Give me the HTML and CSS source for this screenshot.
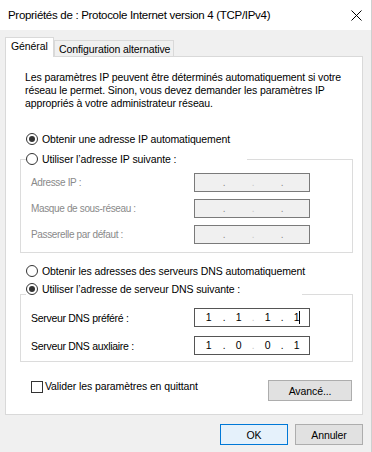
FILE: index.html
```html
<!DOCTYPE html>
<html lang="fr">
<head>
<meta charset="utf-8">
<title>Propriétés de : Protocole Internet version 4 (TCP/IPv4)</title>
<link rel="stylesheet" href="styles.css">
</head>
<body>
<div class="window">
  <div class="titlebar">
    <span class="title">Propriétés de : Protocole Internet version 4 (TCP/IPv4)</span>
    <svg class="close" width="11" height="11" viewBox="0 0 11 11"><path d="M0.5 0.5 L10.5 10.5 M10.5 0.5 L0.5 10.5" stroke="#000" stroke-width="1" fill="none"/></svg>
  </div>
  <div class="content">
    <div class="tabs">
      <div class="tab active">Général</div>
      <div class="tab">Configuration alternative</div>
    </div>
    <div class="panel">
      <p class="intro">Les paramètres IP peuvent être déterminés automatiquement si votre<br>réseau le permet. Sinon, vous devez demander les paramètres IP<br>appropriés à votre administrateur réseau.</p>

      <div class="radio-row first"><span class="radio checked"></span><span>Obtenir une adresse IP automatiquement</span></div>

      <fieldset class="group group-ip">
        <legend class="legend legend-ip"><span class="radio"></span><span>Utiliser l’adresse IP suivante :</span></legend>
        <div class="rows rows-ip">
          <div class="field disabled"><span class="label">Adresse IP :</span>
            <div class="ipbox"><span></span><span class="dot">.</span><span></span><span class="dot dim">.</span><span></span><span class="dot">.</span><span></span></div></div>
          <div class="field disabled"><span class="label">Masque de sous-réseau :</span>
            <div class="ipbox"><span></span><span class="dot">.</span><span></span><span class="dot dim">.</span><span></span><span class="dot">.</span><span></span></div></div>
          <div class="field disabled"><span class="label">Passerelle par défaut :</span>
            <div class="ipbox"><span></span><span class="dot">.</span><span></span><span class="dot dim">.</span><span></span><span class="dot">.</span><span></span></div></div>
        </div>
      </fieldset>

      <div class="radio-row dns-auto"><span class="radio"></span><span>Obtenir les adresses des serveurs DNS automatiquement</span></div>

      <fieldset class="group group-dns">
        <legend class="legend legend-dns"><span class="radio checked"></span><span>Utiliser l’adresse de serveur DNS suivante :</span></legend>
        <div class="rows rows-dns">
          <div class="field"><span class="label">Serveur DNS préféré :</span>
            <div class="ipbox enabled"><span>1</span><span class="dot">.</span><span>1</span><span class="dot dim">.</span><span>1</span><span class="dot">.</span><span class="caret-cell">1<i class="caret"></i></span></div></div>
          <div class="field"><span class="label">Serveur DNS auxliaire :</span>
            <div class="ipbox enabled"><span>1</span><span class="dot">.</span><span>0</span><span class="dot dim">.</span><span>0</span><span class="dot">.</span><span>1</span></div></div>
        </div>
      </fieldset>

      <div class="check-row">
        <label class="check"><span class="checkbox"></span><span>Valider les paramètres en quittant</span></label>
        <button class="btn advanced">Avancé...</button>
      </div>
    </div>
    <div class="buttons">
      <button class="btn default">OK</button>
      <button class="btn">Annuler</button>
    </div>
  </div>
</div>
</body>
</html>
```
FILE: styles.css
```css
html, body {
  margin: 0;
  padding: 0;
}
body {
  width: 372px;
  height: 452px;
  overflow: hidden;
  background: #f0f0f0;
  font-family: "Liberation Sans", Arial, sans-serif;
  font-size: 10.5px;
  letter-spacing: -0.1px;
  color: #000;
}
.window {
  height: 452px;
  box-sizing: border-box;
  border-right: 1px solid #cfcfcf;
}
.titlebar {
  height: 30px;
  background: #fff;
  display: flex;
  align-items: center;
  justify-content: space-between;
  padding: 0 9px 0 8px;
}
.title {
  font-size: 11.5px;
  letter-spacing: -0.3px;
}
.close {
  display: block;
}
.content {
  padding: 7px 8px 0 5px;
}
.tabs {
  display: flex;
  align-items: flex-end;
  height: 20px;
  margin-bottom: -1px;
  position: relative;
  z-index: 1;
}
.tab {
  box-sizing: border-box;
  border: 1px solid #d9d9d9;
  border-bottom: none;
  background: #f0f0f0;
  height: 16px;
  margin-bottom: 1px;
  width: 120px;
  padding: 1px 0 0 4px;
  line-height: 14px;
}
.tab.active {
  background: #fff;
  width: 49px;
  height: 20px;
  margin-bottom: 0;
  padding: 2px 0 0 5px;
  line-height: 13px;
}
.panel {
  box-sizing: border-box;
  height: 359px;
  background: #fff;
  border: 1px solid #d9d9d9;
  padding: 14px 9px 0 14px;
}
.intro {
  margin: 0 0 0 5px;
  line-height: 13px;
}
.radio-row {
  display: flex;
  align-items: center;
  height: 16px;
  gap: 4px;
  margin-left: 6px;
}
.radio-row.first {
  margin-top: 21px;
}
.radio-row.dns-auto {
  margin-top: 10px;
}
.radio {
  box-sizing: border-box;
  width: 12px;
  height: 12px;
  border: 1px solid #333;
  border-radius: 50%;
  background: #fff;
  display: flex;
  align-items: center;
  justify-content: center;
  flex: none;
}
.radio.checked::after {
  content: "";
  width: 6px;
  height: 6px;
  border-radius: 50%;
  background: #333;
}
.group {
  margin: 4px 0 0;
  padding: 0;
  border: 1px solid #dcdcdc;
  min-width: 0;
}
.group-ip {
  padding-bottom: 8px;
}
.group-dns {
  margin-top: 2px;
  padding-bottom: 6px;
}
.legend {
  display: flex;
  align-items: center;
  gap: 4px;
  padding: 0;
  margin-left: 5px;
  height: 16px;
}
.legend-ip {
  width: 221px;
}
.legend-dns {
  width: 276px;
  box-sizing: content-box;
  padding-bottom: 10px;
  align-items: flex-start;
}
.legend-dns .radio {
  margin-top: 2px;
}
.legend-dns span:last-child {
  line-height: 16px;
}
.rows {
  display: flex;
  flex-direction: column;
  padding-left: 10px;
}
.rows-ip {
  padding-top: 6px;
  gap: 7px;
}
.rows-dns {
  padding-top: 1px;
  gap: 9px;
}
.field {
  display: grid;
  grid-template-columns: 163px 116px;
  align-items: center;
  height: 19px;
}
.field .label {
  letter-spacing: -0.3px;
}
.field.disabled .label {
  color: #8a8a8a;
  font-size: 10px;
  letter-spacing: -0.35px;
}
.ipbox {
  box-sizing: border-box;
  height: 19px;
  border: 1px solid #7a7a7a;
  background: #f0f0f0;
  display: grid;
  grid-template-columns: 27px 4px 25px 4px 25px 4px 1fr;
  align-items: center;
  text-align: center;
  line-height: 17px;
  color: #8a8a8a;
}
.ipbox.enabled {
  background: #fff;
  border-color: #555;
  color: #000;
}
.dot {
  font-size: 10px;
}
.dot.dim {
  color: #c8c8c8;
}
.caret-cell {
  position: relative;
}
.caret {
  position: absolute;
  left: 15px;
  top: 2px;
  width: 1px;
  height: 13px;
  background: #000;
}
.check-row {
  display: flex;
  justify-content: space-between;
  align-items: flex-start;
  margin: 18px 1px 0 11px;
}
.check {
  display: flex;
  align-items: center;
  gap: 2px;
  line-height: 13px;
}
.checkbox {
  box-sizing: border-box;
  width: 12px;
  height: 12px;
  border: 1px solid #333;
  background: #fff;
  flex: none;
}
.btn {
  font-family: "Liberation Sans", Arial, sans-serif;
  font-size: 10.5px;
  letter-spacing: -0.1px;
  color: #000;
  box-sizing: border-box;
  height: 21px;
  width: 68px;
  border: 1px solid #adadad;
  background: #e1e1e1;
  padding: 0;
  margin: 0;
}
.btn.advanced {
  width: 84px;
}
.btn.default {
  border-color: #0078d7;
  background: #e5f1fb;
}
.buttons {
  display: flex;
  justify-content: flex-end;
  gap: 7px;
  margin-top: 9px;
}
```
